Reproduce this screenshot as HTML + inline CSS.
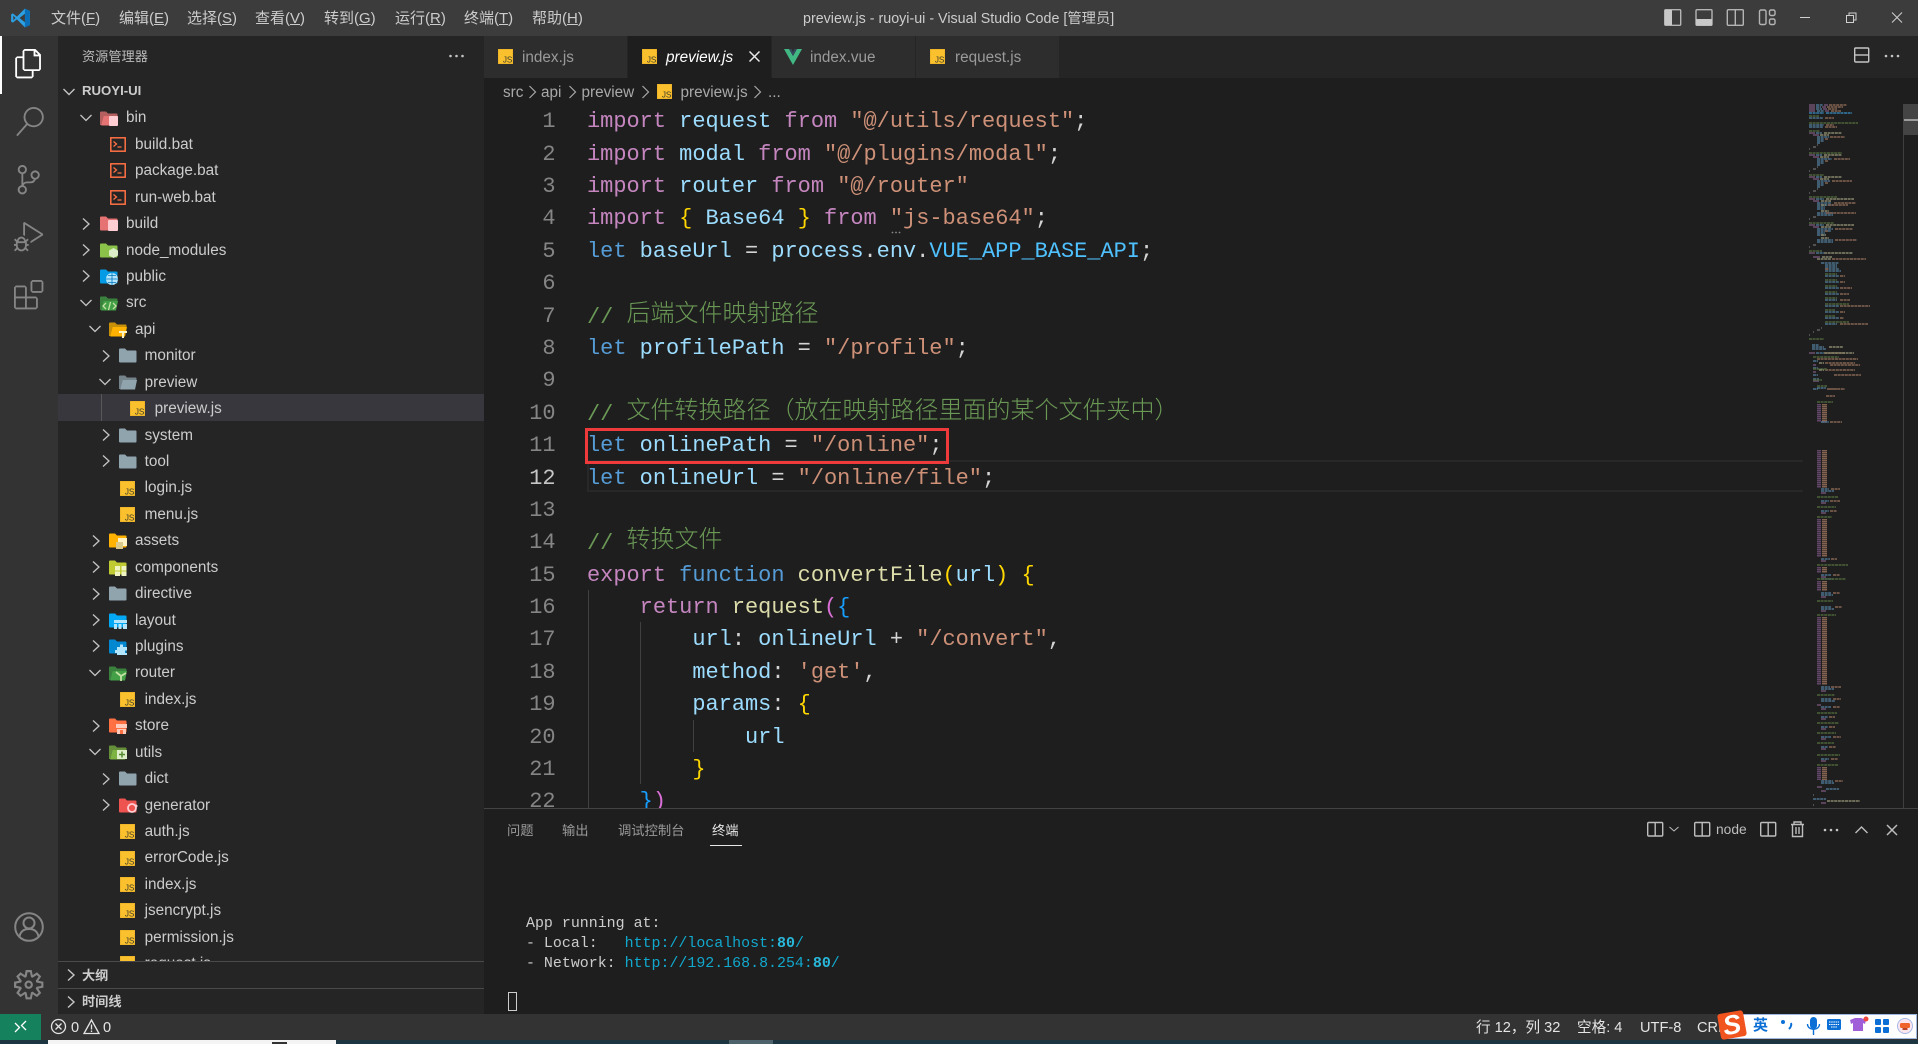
<!DOCTYPE html>
<html lang="zh"><head><meta charset="utf-8"><title>preview.js - ruoyi-ui - Visual Studio Code</title>
<style>
html,body{margin:0;padding:0;width:1918px;height:1044px;overflow:hidden;background:#1e1e1e}
body{position:relative;font-family:"Liberation Sans","Noto Sans CJK SC",sans-serif;color:#ccc}
.a{position:absolute}
svg{position:absolute;overflow:visible}
.m{position:absolute;top:0;height:36px;line-height:38px;font-size:15px;color:#ccc;white-space:nowrap}
.r{position:absolute;left:0;height:26.4px;width:484px}
.r span{position:absolute;top:0;line-height:28.4px;font-size:15.3px;color:#ccc;white-space:nowrap}
.r svg{top:6.3px}
.r svg.c{top:7.500px;width:12px;height:12px;fill:none;stroke:#c5c5c5;stroke-width:1.3}
.t{position:absolute;top:36px;height:42px;line-height:44px;font-size:15.3px;color:#9a9a9a;background:#2d2d2d}
.t span{position:absolute;top:0;white-space:nowrap}
.ed{position:absolute;left:0;top:106px;width:1918px;height:702px;overflow:hidden;font-family:"Liberation Mono",monospace;font-size:21.95px;line-height:32.38px;white-space:pre}
.n{position:absolute;left:500px;width:55.6px;text-align:right;color:#858585}
.l{position:absolute;left:587px;color:#d4d4d4;height:32.38px}
.k{color:#c586c0}.v{color:#9cdcfe}.s{color:#ce9178}.b{color:#569cd6}.f{color:#dcdcaa}.C{color:#4fc1ff}.g{color:#ffd700}.o{color:#da70d6}.u{color:#179fff}
.c2{color:#6a9955}.c2 i{font-style:normal;font-family:"Noto Sans CJK SC",sans-serif;font-size:24px;font-weight:300;line-height:1;position:relative;top:-2px}
.bc{position:absolute;top:78px;height:26px;line-height:30px;font-size:15.3px;color:#a9a9a9;white-space:nowrap}
.pt{position:absolute;top:819px;line-height:23px;font-size:13.3px;color:#9a9a9a;white-space:nowrap}
.tm{position:absolute;left:526px;font-family:"Liberation Mono",monospace;font-size:14.95px;line-height:20px;color:#ccc;white-space:pre}
.tm a{color:#11a8cd;text-decoration:none}.tm b{color:#29b8db}
.st{position:absolute;top:1014px;line-height:28px;height:26px;font-size:14.6px;color:#e4e4e4;white-space:nowrap}
.ic{fill:none;stroke:#c5c5c5;stroke-width:1.4}
</style></head><body>
<svg width="0" height="0" style="position:absolute">
<defs>
<symbol id="cd" viewBox="0 0 12 12"><path d="M0.5 3l5.5 5.5L11.5 3"/></symbol>
<symbol id="cr" viewBox="0 0 12 12"><path d="M3 0.5L9 6l-6 5.500"/></symbol>
<symbol id="js" viewBox="0 0 15 15"><rect width="15" height="15" fill="#fbc02d"/><path d="M0 0h15v15H0z" fill="none" stroke="#e0a526" stroke-width=".8"/><text x="14.4" y="13.6" text-anchor="end" font-family="Liberation Sans" font-size="8.200" fill="#3a3a2a">JS</text></symbol>
<symbol id="bat" viewBox="0 0 16 15"><rect x=".8" y=".8" width="14.400" height="13.400" fill="none" stroke="#ff7043" stroke-width="1.500"/><path d="M3.500 4.500l3 2.500-3 2.500M7.500 10h4" fill="none" stroke="#ff7043" stroke-width="1.300"/></symbol>
<symbol id="fc" viewBox="0 0 18 15"><path d="M0 1.500Q0 .5 1 .5h5l2 2h8.500q1 0 1 1v10q0 1-1 1H1q-1 0-1-1z"/></symbol>
<symbol id="fo" viewBox="0 0 18 15"><path d="M1 .5h5l2 2h8.500q1 0 1 1V5H3.500L1.500 14H0V1.500Q0 .5 1 .5z" opacity=".75"/><path d="M3.500 5H18l-2 9.500H1.200z"/></symbol>
</defs></svg>

<!-- title bar -->
<div class="a" style="left:0;top:0;width:1918px;height:36px;background:#3c3c3c"></div>
<svg style="left:10px;top:8px" width="21" height="20" viewBox="0 0 100 100"><path fill="#2d9fe3" d="M72 3L32 43 12 27 3 32v36l9 5 20-16 40 40 25-12V15z"/><path fill="#0a6fb8" d="M72 3l25 12v70L72 97z"/><path fill="#3c3c3c" d="M72 29v42L45 50z"/><path fill="#3c3c3c" d="M14 38l11 12-11 12z"/></svg>
<div class="m" style="left:51px">文件(<u>F</u>)</div>
<div class="m" style="left:119px">编辑(<u>E</u>)</div>
<div class="m" style="left:187px">选择(<u>S</u>)</div>
<div class="m" style="left:255px">查看(<u>V</u>)</div>
<div class="m" style="left:324px">转到(<u>G</u>)</div>
<div class="m" style="left:395px">运行(<u>R</u>)</div>
<div class="m" style="left:464px">终端(<u>T</u>)</div>
<div class="m" style="left:532px">帮助(<u>H</u>)</div>
<div class="m" style="left:803px;font-size:14.3px;color:#ccc;line-height:38px">preview.js - ruoyi-ui - Visual Studio Code [管理员]</div>
<svg style="left:1664px;top:9px" width="112" height="18" fill="none" stroke="#b4b4b4" stroke-width="1.400">
<rect x=".7" y=".7" width="16" height="15.600" rx="1"/><rect x="1" y="1" width="7" height="15" fill="#c8c8c8" stroke="none"/>
<rect x="32" y=".7" width="16" height="15.600" rx="1"/><rect x="32" y="10" width="16" height="6.500" fill="#c8c8c8" stroke="none"/>
<rect x="63.300" y=".7" width="16" height="15.600" rx="1"/><path d="M71.300 1v15"/>
<rect x="95.500" y="1" width="6.500" height="14.500" rx="1.500"/><rect x="105.500" y="1" width="5.500" height="5.500" rx="1.500"/><rect x="105.500" y="10" width="5.500" height="5.500" rx="1.500"/>
</svg>
<svg style="left:1800px;top:10px" width="104" height="16" fill="none" stroke="#d0d0d0" stroke-width="1">
<path d="M0 7.500h10"/><rect x="46.500" y="5.500" width="7" height="7"/><path d="M49 5V3h7v7h-2"/><path d="M92 2.500l10 10M102 2.500l-10 10"/>
</svg>

<!-- activity bar -->
<div class="a" style="left:0;top:36px;width:58px;height:978px;background:#333"></div>
<div class="a" style="left:0;top:36px;width:2px;height:58px;background:#fff"></div>
<svg style="left:14px;top:49px" width="29.400" height="29.400" viewBox="0 0 24 24" fill="#fff"><path d="M17.500 0h-9L7 1.500V6H2.500L1 7.500v15.070L2.500 24h12.070L16 22.570V18h4.700l1.300-1.430V4.500L17.500 0zm0 2.120l2.380 2.380H17.500V2.120zm-3 20.380h-12v-15H7v9.070L8.500 18h6v4.500zm6-6h-12v-15H16V6h4.500v10.500z"/></svg>
<svg style="left:15px;top:107px" width="29.400" height="29.400" viewBox="0 0 24 24" fill="#858585"><path d="M15.250 0a8.250 8.250 0 0 0-6.180 13.720L1 22.880l1.120 1 8.050-9.120A8.251 8.251 0 1 0 15.250.01V0zm0 15a6.750 6.750 0 1 1 0-13.500 6.750 6.750 0 0 1 0 13.500z"/></svg>
<svg style="left:14px;top:165px" width="29.400" height="29.400" viewBox="0 0 24 24" fill="#858585"><path d="M21.007 8.222A3.738 3.738 0 0 0 15.045 5.200a3.737 3.737 0 0 0 1.156 6.583 2.988 2.988 0 0 1-2.668 1.670h-2.990a4.456 4.456 0 0 0-2.989 1.165V7.400a3.737 3.737 0 1 0-1.494 0v9.117a3.776 3.776 0 1 0 1.816.099 2.990 2.990 0 0 1 2.668-1.667h2.990a4.484 4.484 0 0 0 4.223-3.039 3.736 3.736 0 0 0 3.250-3.687zM4.565 3.738a2.242 2.242 0 1 1 4.484 0 2.242 2.242 0 0 1-4.484 0zm4.484 16.440a2.242 2.242 0 1 1-4.484 0 2.242 2.242 0 0 1 4.484 0zm8.221-9.715a2.242 2.242 0 1 1 0-4.485 2.242 2.242 0 0 1 0 4.485z"/></svg>
<svg style="left:14px;top:222px" width="29.400" height="29.400" viewBox="0 0 24 24" fill="#858585"><path d="M10.940 13.500l-1.320 1.320a3.730 3.730 0 0 0-7.240 0L1.060 13.500 0 14.560l1.720 1.720-.22.220V18H0v1.500h1.500v.08c.077.489.214.966.41 1.420L0 22.940 1.060 24l1.650-1.650A4.308 4.308 0 0 0 6 24a4.310 4.310 0 0 0 3.290-1.650L10.940 24 12 22.940 10.090 21c.198-.464.336-.951.41-1.450v-.1H12V18h-1.500v-1.500l-.22-.22L12 14.560l-1.060-1.060zM6 13.500a2.250 2.250 0 0 1 2.250 2.250h-4.500A2.250 2.250 0 0 1 6 13.500zm3 6a3.330 3.330 0 0 1-3 3 3.330 3.330 0 0 1-3-3v-2.250h6v2.250zm14.760-9.900v1.260L13.500 17.370v-1.800l8.500-5.370L9 2v9.460a5.070 5.070 0 0 0-1.500-.72V.63L8.640 0l15.120 9.600z"/></svg>
<svg style="left:14px;top:280px" width="29.400" height="29.400" viewBox="0 0 24 24" fill="#858585"><path d="M13.500 1.500L15 0h7.500L24 1.500V9l-1.500 1.500H15L13.500 9V1.500zm1.500 0V9h7.500V1.500H15zM0 15V6l1.500-1.500H9L10.500 6v7.500H18l1.500 1.500v7.500L18 24H1.500L0 22.500V15zm9-1.500V6H1.500v7.500H9zM9 15H1.500v7.500H9V15zm1.500 7.500H18V15h-7.500v7.500z"/></svg>
<svg style="left:14px;top:912px" width="30" height="30" viewBox="0 0 30 30" fill="none" stroke="#858585" stroke-width="2"><circle cx="15" cy="15" r="13.800"/><circle cx="15" cy="11" r="5.500"/><path d="M5.500 24.500c1-5 4.500-7.500 9.500-7.500s8.500 2.500 9.500 7.500"/></svg>
<svg style="left:14px;top:970px" width="29.400" height="29.400" viewBox="0 0 24 24" fill="#858585"><path d="M19.850 8.750l4.150.83v4.840l-4.150.83 2.350 3.520-3.430 3.430-3.520-2.350-.83 4.150H9.580l-.83-4.150-3.520 2.350-3.430-3.430 2.350-3.520L0 14.420V9.580l4.150-.83L1.800 5.230 5.230 1.800l3.520 2.350L9.580 0h4.840l.83 4.150 3.520-2.350 3.430 3.430-2.350 3.520zm-1.570 5.070l4-.81v-2l-4-.81-.54-1.300 2.290-3.430-1.430-1.430-3.430 2.290-1.300-.54-.81-4h-2l-.81 4-1.300.54-3.430-2.290-1.430 1.430L6.380 8.900l-.54 1.300-4 .81v2l4 .81.54 1.300-2.290 3.430 1.430 1.430 3.430-2.290 1.300.54.81 4h2l.81-4 1.300-.54 3.430 2.290 1.430-1.430-2.290-3.430.54-1.300zm-8.186-4.672A3.430 3.430 0 0 1 12 8.570 3.440 3.440 0 0 1 15.430 12a3.430 3.430 0 1 1-5.336-2.852zm.956 4.274c.281.188.612.288.95.288A1.700 1.700 0 0 0 13.710 12a1.710 1.710 0 1 0-2.660 1.422z"/></svg>

<!-- sidebar -->
<div class="a" style="left:58px;top:36px;width:426px;height:978px;background:#252526"></div>
<div class="a" style="left:82px;top:47px;font-size:13.2px;line-height:20px;color:#bbb">资源管理器</div>
<svg style="left:449px;top:54px" width="16" height="4" fill="#c5c5c5"><circle cx="1.500" cy="2" r="1.300"/><circle cx="7.500" cy="2" r="1.300"/><circle cx="13.500" cy="2" r="1.300"/></svg>
<svg class="ic" style="left:63px;top:86px" width="12" height="12" viewBox="0 0 12 12"><path d="M0.500 3l5.500 5.500L11.500 3"/></svg>
<div class="a" style="left:82px;top:81px;font-size:13.2px;line-height:20px;font-weight:700;color:#ccc">RUOYI-UI</div>
<div class="a" style="left:58px;top:394px;width:426px;height:27px;background:#37373d"></div>
<div class="a" style="left:101px;top:394px;width:1px;height:27px;background:#585858"></div>

<div class="a" style="left:0;top:0;width:484px;height:961px;overflow:hidden">
<div class="r" style="top:104.3px"><svg class="c" style="left:80px"><use href="#cd"/></svg><svg style="left:100px;color:#e57373;fill:#e57373" width="18" height="15"><use href="#fo"/><rect x="9" y="5" width="9" height="10" rx="1" fill="#ffcdd2"/></svg><span style="left:126px">bin</span></div>
<div class="r" style="top:130.7px"><svg style="left:110px" width="16" height="15"><use href="#bat"/></svg><span style="left:135px">build.bat</span></div>
<div class="r" style="top:157.2px"><svg style="left:110px" width="16" height="15"><use href="#bat"/></svg><span style="left:135px">package.bat</span></div>
<div class="r" style="top:183.6px"><svg style="left:110px" width="16" height="15"><use href="#bat"/></svg><span style="left:135px">run-web.bat</span></div>
<div class="r" style="top:210.0px"><svg class="c" style="left:80px"><use href="#cr"/></svg><svg style="left:100px;fill:#e57373" width="18" height="15"><use href="#fc"/><rect x="8" y="4" width="10" height="11" rx="1" fill="#ffcdd2"/></svg><span style="left:126px">build</span></div>
<div class="r" style="top:236.5px"><svg class="c" style="left:80px"><use href="#cr"/></svg><svg style="left:100px;fill:#8bc34a" width="18" height="15"><use href="#fc"/><path d="M13.500 5l4.500 2.500v5l-4.500 2.500-4.500-2.500v-5z" fill="#dcedc8"/></svg><span style="left:126px">node_modules</span></div>
<div class="r" style="top:262.9px"><svg class="c" style="left:80px"><use href="#cr"/></svg><svg style="left:100px;fill:#039be5" width="18" height="15"><use href="#fc"/><circle cx="12" cy="10" r="6" fill="#b3e5fc"/><path d="M6 10h12M12 4v12M8 6.500h8M8 13.500h8" stroke="#0277bd" stroke-width=".8" fill="none"/></svg><span style="left:126px">public</span></div>
<div class="r" style="top:289.3px"><svg class="c" style="left:80px"><use href="#cd"/></svg><svg style="left:100px;fill:#43a047" width="18" height="15"><use href="#fo"/><path d="M6 7l-3 3 3 3M13 7l3 3-3 3M10.500 6l-2 8" stroke="#c5e1a5" stroke-width="1.300" fill="none"/></svg><span style="left:126px">src</span></div>
<div class="r" style="top:315.7px"><svg class="c" style="left:89px"><use href="#cd"/></svg><svg style="left:109px;fill:#ffb300" width="18" height="15"><use href="#fo"/><path d="M10 9h8v2h-3v5h-2v-5h-3z" fill="#fff3c4"/></svg><span style="left:135px">api</span></div>
<div class="r" style="top:342.2px"><svg class="c" style="left:100px"><use href="#cr"/></svg><svg style="left:119px;fill:#90a4ae" width="18" height="15"><use href="#fc"/></svg><span style="left:144.600px">monitor</span></div>
<div class="r" style="top:368.6px"><svg class="c" style="left:99px"><use href="#cd"/></svg><svg style="left:119px;fill:#90a4ae" width="18" height="15"><use href="#fo"/></svg><span style="left:144.600px">preview</span></div>
<div class="r" style="top:395.0px"><svg style="left:130px" width="15" height="15"><use href="#js"/></svg><span style="left:154.600px">preview.js</span></div>
<div class="r" style="top:421.5px"><svg class="c" style="left:100px"><use href="#cr"/></svg><svg style="left:119px;fill:#90a4ae" width="18" height="15"><use href="#fc"/></svg><span style="left:144.600px">system</span></div>
<div class="r" style="top:447.9px"><svg class="c" style="left:100px"><use href="#cr"/></svg><svg style="left:119px;fill:#90a4ae" width="18" height="15"><use href="#fc"/></svg><span style="left:144.600px">tool</span></div>
<div class="r" style="top:474.3px"><svg style="left:120px" width="15" height="15"><use href="#js"/></svg><span style="left:144.600px">login.js</span></div>
<div class="r" style="top:500.8px"><svg style="left:120px" width="15" height="15"><use href="#js"/></svg><span style="left:144.600px">menu.js</span></div>
<div class="r" style="top:527.2px"><svg class="c" style="left:90px"><use href="#cr"/></svg><svg style="left:109px;fill:#ffb300" width="18" height="15"><use href="#fc"/><rect x="9" y="5" width="9" height="8" fill="#fff3c4"/><rect x="7" y="9" width="7" height="7" fill="#d9c98a"/></svg><span style="left:135px">assets</span></div>
<div class="r" style="top:553.6px"><svg class="c" style="left:90px"><use href="#cr"/></svg><svg style="left:109px;fill:#c0ca33" width="18" height="15"><use href="#fc"/><path d="M6 6h5v4.500H6zM12.500 6h5v4.500h-5zM6 11.500h5V16H6zM12.500 11.500h5V16h-5z" fill="#f0f4c3"/></svg><span style="left:135px">components</span></div>
<div class="r" style="top:580.0px"><svg class="c" style="left:90px"><use href="#cr"/></svg><svg style="left:109px;fill:#90a4ae" width="18" height="15"><use href="#fc"/></svg><span style="left:135px">directive</span></div>
<div class="r" style="top:606.5px"><svg class="c" style="left:90px"><use href="#cr"/></svg><svg style="left:109px;fill:#03a9f4" width="18" height="15"><use href="#fc"/><path d="M5 7h13v3H5zM5 11h3v5H5zM9.500 11h3v5h-3zM14 11h4v5h-4z" fill="#b3e5fc"/></svg><span style="left:135px">layout</span></div>
<div class="r" style="top:632.9px"><svg class="c" style="left:90px"><use href="#cr"/></svg><svg style="left:109px;fill:#0288d1" width="18" height="15"><use href="#fc"/><path d="M8 8h3V5.500h3V8h4v3.500h-2V14h2v2H8v-2H6v-3h2z" fill="#b3e5fc"/></svg><span style="left:135px">plugins</span></div>
<div class="r" style="top:659.3px"><svg class="c" style="left:89px"><use href="#cd"/></svg><svg style="left:109px;fill:#43a047" width="18" height="15"><use href="#fo"/><path d="M7 6l5 4 5-3M12 10v5" stroke="#c5e1a5" stroke-width="1.800" fill="none"/></svg><span style="left:135px">router</span></div>
<div class="r" style="top:685.8px"><svg style="left:120px" width="15" height="15"><use href="#js"/></svg><span style="left:144.600px">index.js</span></div>
<div class="r" style="top:712.2px"><svg class="c" style="left:90px"><use href="#cr"/></svg><svg style="left:109px;fill:#ff7043" width="18" height="15"><use href="#fc"/><path d="M7 6h11v4H7zM8 11h9v5H8z" fill="#ffccbc"/><rect x="11" y="12" width="3" height="4" fill="#ff7043"/></svg><span style="left:135px">store</span></div>
<div class="r" style="top:738.6px"><svg class="c" style="left:89px"><use href="#cd"/></svg><svg style="left:109px;fill:#7cb342" width="18" height="15"><use href="#fo"/><rect x="8" y="5" width="10" height="9" fill="#dcedc8"/><path d="M13 6.500v6M10 9.500h6" stroke="#558b2f" stroke-width="1.500"/></svg><span style="left:135px">utils</span></div>
<div class="r" style="top:765.1px"><svg class="c" style="left:100px"><use href="#cr"/></svg><svg style="left:119px;fill:#90a4ae" width="18" height="15"><use href="#fc"/></svg><span style="left:144.600px">dict</span></div>
<div class="r" style="top:791.5px"><svg class="c" style="left:100px"><use href="#cr"/></svg><svg style="left:119px;fill:#ef5350" width="18" height="15"><use href="#fc"/><circle cx="13" cy="10" r="4" fill="none" stroke="#ffcdd2" stroke-width="1.800"/><circle cx="17" cy="8" r="1.500" fill="#ffcdd2"/></svg><span style="left:144.600px">generator</span></div>
<div class="r" style="top:817.9px"><svg style="left:120px" width="15" height="15"><use href="#js"/></svg><span style="left:144.600px">auth.js</span></div>
<div class="r" style="top:844.3px"><svg style="left:120px" width="15" height="15"><use href="#js"/></svg><span style="left:144.600px">errorCode.js</span></div>
<div class="r" style="top:870.8px"><svg style="left:120px" width="15" height="15"><use href="#js"/></svg><span style="left:144.600px">index.js</span></div>
<div class="r" style="top:897.2px"><svg style="left:120px" width="15" height="15"><use href="#js"/></svg><span style="left:144.600px">jsencrypt.js</span></div>
<div class="r" style="top:923.6px"><svg style="left:120px" width="15" height="15"><use href="#js"/></svg><span style="left:144.600px">permission.js</span></div>
<div class="r" style="top:950.1px"><svg style="left:120px" width="15" height="15"><use href="#js"/></svg><span style="left:144.600px">request.js</span></div>
</div>
<div class="a" style="left:58px;top:961px;width:426px;height:1px;background:#4a4a4a"></div>
<div class="a" style="left:58px;top:988px;width:426px;height:1px;background:#4a4a4a"></div>
<svg class="ic" style="left:65px;top:969px" width="12" height="12" viewBox="0 0 12 12"><path d="M3 0.500L9 6l-6 5.500"/></svg>
<svg class="ic" style="left:65px;top:996px" width="12" height="12" viewBox="0 0 12 12"><path d="M3 0.500L9 6l-6 5.500"/></svg>
<div class="a" style="left:82px;top:966px;font-size:13.200px;line-height:20px;font-weight:700;color:#ccc">大纲</div>
<div class="a" style="left:82px;top:992px;font-size:13.200px;line-height:20px;font-weight:700;color:#ccc">时间线</div>

<!-- tabs -->
<div class="a" style="left:484px;top:36px;width:1434px;height:42px;background:#252526"></div>
<div class="t" style="left:484px;width:143px"><svg style="left:14px;top:13px" width="15" height="15"><use href="#js"/></svg><span style="left:38px">index.js</span></div>
<div class="t" style="left:628px;width:143px;background:#1e1e1e;color:#fff"><svg style="left:14px;top:13px" width="15" height="15"><use href="#js"/></svg><span style="left:38px;font-style:italic">preview.js</span><svg style="left:121px;top:15px" width="11" height="11" stroke="#e8e8e8" stroke-width="1.500"><path d="M.5.500l10 10M10.500.500l-10 10"/></svg></div>
<div class="t" style="left:772px;width:143px"><svg style="left:12px;top:13px" width="18" height="16" viewBox="0 0 18 16"><path fill="#41b883" d="M0 0h5l4 7 4-7h5L9 16z"/><path fill="#35495e" d="M5 0h2.500L9 3l1.500-3H13L9 7z"/></svg><span style="left:38px">index.vue</span></div>
<div class="t" style="left:916px;width:143px"><svg style="left:14px;top:13px" width="15" height="15"><use href="#js"/></svg><span style="left:39px">request.js</span></div>
<svg style="left:1854px;top:47px" width="48" height="18" fill="none" stroke="#c5c5c5" stroke-width="1.400"><rect x=".7" y="1" width="14" height="14" rx="1"/><path d="M1 8h14"/><g fill="#c5c5c5" stroke="none"><circle cx="32" cy="9" r="1.300"/><circle cx="38" cy="9" r="1.300"/><circle cx="44" cy="9" r="1.300"/></g></svg>

<!-- breadcrumbs -->
<div class="bc" style="left:503px">src</div><div class="bc" style="left:541px">api</div><div class="bc" style="left:581.500px">preview</div><div class="bc" style="left:680.500px">preview.js</div><div class="bc" style="left:768px">...</div>
<svg style="left:529px;top:85px" width="232" height="14" fill="none" stroke="#a9a9a9" stroke-width="1.200"><path d="M0.500 1l6 6-6 6M40.500 1l6 6-6 6M113.500 1l6 6-6 6M225.500 1l6 6-6 6"/></svg>
<svg style="left:656.500px;top:84px" width="15" height="15"><use href="#js"/></svg>

<!-- editor -->
<div class="a" style="left:587px;top:460px;width:1216px;height:32px;border:2px solid #282828;border-right:0;box-sizing:border-box"></div>
<div class="a" style="left:587.500px;top:590px;width:1px;height:218px;background:#404040"></div>
<div class="a" style="left:640px;top:622px;width:1px;height:162px;background:#404040"></div>
<div class="a" style="left:692.500px;top:720px;width:1px;height:32px;background:#404040"></div>
<div class="ed">
<div class="n" style="top:0.3px">1</div><div class="l" style="top:0.3px"><span class="k">import</span> <span class="v">request</span> <span class="k">from</span> <span class="s">"@/utils/request"</span>;</div>
<div class="n" style="top:32.7px">2</div><div class="l" style="top:32.7px"><span class="k">import</span> <span class="v">modal</span> <span class="k">from</span> <span class="s">"@/plugins/modal"</span>;</div>
<div class="n" style="top:65.1px">3</div><div class="l" style="top:65.1px"><span class="k">import</span> <span class="v">router</span> <span class="k">from</span> <span class="s">"@/router"</span></div>
<div class="n" style="top:97.4px">4</div><div class="l" style="top:97.4px"><span class="k">import</span> <span class="g">{</span> <span class="v">Base64</span> <span class="g">}</span> <span class="k">from</span> <span class="s">"js-base64"</span>;</div>
<div class="n" style="top:129.8px">5</div><div class="l" style="top:129.8px"><span class="b">let</span> <span class="v">baseUrl</span> = <span class="v">process</span>.<span class="v">env</span>.<span class="C">VUE_APP_BASE_API</span>;</div>
<div class="n" style="top:162.2px">6</div>
<div class="n" style="top:194.6px">7</div><div class="l c2" style="top:194.6px">// <i>后端文件映射路径</i></div>
<div class="n" style="top:227px">8</div><div class="l" style="top:227px"><span class="b">let</span> <span class="v">profilePath</span> = <span class="s">"/profile"</span>;</div>
<div class="n" style="top:259.3px">9</div>
<div class="n" style="top:291.7px">10</div><div class="l c2" style="top:291.7px">// <i>文件转换路径（放在映射路径里面的某个文件夹中）</i></div>
<div class="n" style="top:324.1px">11</div><div class="l" style="top:324.1px"><span class="b">let</span> <span class="v">onlinePath</span> = <span class="s">"/online"</span>;</div>
<div class="n" style="top:356.5px;color:#c6c6c6">12</div><div class="l" style="top:356.5px"><span class="b">let</span> <span class="v">onlineUrl</span> = <span class="s">"/online/file"</span>;</div>
<div class="n" style="top:388.9px">13</div>
<div class="n" style="top:421.2px">14</div><div class="l c2" style="top:421.2px">// <i>转换文件</i></div>
<div class="n" style="top:453.6px">15</div><div class="l" style="top:453.6px"><span class="k">export</span> <span class="b">function</span> <span class="f">convertFile</span><span class="g">(</span><span class="v">url</span><span class="g">)</span> <span class="g">{</span></div>
<div class="n" style="top:486px">16</div><div class="l" style="top:486px">    <span class="k">return</span> <span class="f">request</span><span class="o">(</span><span class="u">{</span></div>
<div class="n" style="top:518.4px">17</div><div class="l" style="top:518.4px">        <span class="v">url</span>: <span class="v">onlineUrl</span> + <span class="s">"/convert"</span>,</div>
<div class="n" style="top:550.8px">18</div><div class="l" style="top:550.8px">        <span class="v">method</span>: <span class="s">'get'</span>,</div>
<div class="n" style="top:583.1px">19</div><div class="l" style="top:583.1px">        <span class="v">params</span>: <span class="g">{</span></div>
<div class="n" style="top:615.5px">20</div><div class="l" style="top:615.5px">            <span class="v">url</span></div>
<div class="n" style="top:647.9px">21</div><div class="l" style="top:647.9px">        <span class="g">}</span></div>
<div class="n" style="top:680.3px">22</div><div class="l" style="top:680.3px">    <span class="u">}</span><span class="o">)</span></div>
</div>
<svg style="left:891px;top:231px" width="10" height="3" fill="#8a8a8a"><circle cx="1.500" cy="1.500" r=".9"/><circle cx="5" cy="1.500" r=".9"/><circle cx="8.500" cy="1.500" r=".9"/></svg>
<div class="a" style="left:584.500px;top:427.500px;width:364.500px;height:36.500px;border:3px solid #ef3a3c;box-sizing:border-box"></div>

<!-- minimap -->
<svg style="left:1800px;top:100px;opacity:.85" width="118" height="710" fill="none" stroke-width="1.400">
<path stroke="#7b5a80" d="M9 5h6M9 7h6M9 9h6M9 11h6M24 5h4M22 7h4M23 9h4M25 11h4M9 33h6M13 35h6M9 55h6M13 57h6M9 77h6M13 79h6M9 99h6M13 101h6M9 125h6M13 127h6M9 153h6M13 157h7M9 253h6M13 265h3M13 272h3M13 281h6M21 322h5M21 393h5M21 403h5M21 413h5M21 461h5M21 477h5M21 497h5M21 511h5M21 591h5M17 605h4M21 609h5M21 619h5M21 629h5M21 639h5M21 649h5M21 661h5M17 687h5M21 691h5M21 703h5"/>
<path stroke="#6d4d74" stroke-width="4" stroke-dasharray="1.500 .5" d="M19 304V322M19 350V388M19 419V457M19 467V473M19 481V491M19 517V585M19 667V680"/>
<path stroke="#96705a" stroke-width="5" stroke-dasharray="1.500 .5" d="M24.500 304V322M24.500 350V388M24.500 419V457M24.500 467V473M24.500 481V491M24.500 517V585M24.500 667V680"/>
<path stroke="#55809f" stroke-dasharray="3 .6" d="M16 5h7M16 7h5M16 9h6M17 11h7M9 18h14M9 25h15M9 27h14M16 33h6M17 37h12M17 39h7M17 41h7M17 43h3M16 55h6M17 59h15M17 61h7M17 63h7M17 65h3M16 77h6M17 81h13M17 83h7M17 85h7M17 87h3M16 99h8M17 103h14M17 105h16M17 107h8M17 109h8M17 113h16M17 115h16M16 125h8M17 129h16M17 131h14M17 133h8M17 135h8M17 140h16M17 142h16M16 153h8M21 163h18M25 165h12M25 167h12M25 169h14M25 171h16M25 176h14M25 182h14M25 188h14M25 194h14M25 200h12M25 206h14M25 212h14M25 218h14M25 224h12M12 245h7M12 247h12M12 249h14M16 253h8M13 261h5M13 268h5M13 275h5M13 279h6M17 288h9M13 289h5M21 322h8M21 389h8M21 391h13M21 401h8M21 411h8M21 459h9M21 475h10M21 479h12M21 493h10M21 495h12M21 507h10M21 509h13M21 587h9M21 589h13M21 599h10M21 601h14M21 607h10M21 617h7M21 627h7M21 637h10M21 647h7M21 659h8M21 681h12M21 683h13M26 689h13M13 699h13"/>
<path stroke="#3a90c5" stroke-dasharray="3 .6" d="M26 13h26M9 13h15"/>
<path stroke="#96705a" stroke-dasharray="3 .6" d="M29 5h18M27 7h16M28 9h9M31 11h10M25 18h9M26 25h8M25 27h12M30 37h15M25 39h3M34 59h16M25 61h3M32 81h20M25 83h3M34 103h22M28 105h20M26 113h30M35 129h18M25 131h3M35 140h22M25 169h4M32 159h34M40 176h5M40 182h5M40 188h12M40 194h9M40 200h10M40 206h30M40 212h5M40 218h4M40 224h28M25 253h20M17 259h41M25 263h30M30 265h30M25 270h30M34 275h27M30 289h15M27 289h10M26 296h9M30 322h12M31 389h9M30 401h10M30 411h7M31 459h6M33 475h7M33 493h7M35 507h7M31 587h10M33 599h8M33 607h7M29 617h6M29 627h6M33 637h8M29 647h7M31 659h7M35 681h8"/>
<path stroke="#55703f" stroke-dasharray="3 .6" d="M9 16h10M9 23h49M9 31h11M9 53h33M9 75h15M9 97h28M9 123h25M9 151h13M25 174h12M25 180h12M25 186h12M25 192h12M25 198h12M25 204h24M25 210h10M25 216h10M25 222h24M9 239h15M13 257h26M13 269h14M13 280h9M17 286h10M17 302h16M17 397h21M17 407h19M17 417h15M17 465h31M17 479h29M17 501h16M17 515h19M17 595h18M17 613h20M17 623h22M17 633h19M17 643h17M17 655h23M17 665h21"/>
<path stroke="#9a9a7a" stroke-dasharray="3 .6" d="M24 33h18M20 35h9M24 55h18M20 57h9M24 77h18M20 79h9M26 99h28M21 101h10M26 125h28M21 127h10M21 105h5M21 135h5M24 153h29M22 157h10M17 159h14M24 253h30M19 263h5M19 270h5M21 111h8M21 138h8M29 247h14M27 701h33"/>
<path stroke="#6f6f6f" d="M17 45h1M13 47h3M9 49h1M17 67h1M13 69h3M9 71h1M17 89h1M13 91h3M9 93h1M13 117h3M9 119h1M13 145h3M9 147h1M21 228h1M17 230h3M13 232h1M9 235h1M13 695h1M13 705h1"/>
</svg>
<div class="a" style="left:1903px;top:104px;width:1px;height:704px;background:#3f3f3f"></div>
<div class="a" style="left:1903px;top:104px;width:15px;height:31px;background:#444"></div>
<div class="a" style="left:1904px;top:119px;width:14px;height:2px;background:#9c9c9c"></div>

<!-- panel -->
<div class="a" style="left:484px;top:808px;width:1434px;height:206px;background:#1e1e1e;border-top:1px solid #434343;box-sizing:border-box"></div>
<div class="pt" style="left:507px">问题</div><div class="pt" style="left:562px">输出</div><div class="pt" style="left:618px">调试控制台</div><div class="pt" style="left:712px;color:#e7e7e7">终端</div>
<div class="a" style="left:710px;top:845px;width:32px;height:1px;background:#e7e7e7"></div>
<div class="tm" style="top:914px">App running at:</div>
<div class="tm" style="top:934px">- Local:   <a>http://localhost:<b>80</b>/</a></div>
<div class="tm" style="top:954px">- Network: <a>http://192.168.8.254:<b>80</b>/</a></div>
<div class="a" style="left:508px;top:992px;width:9px;height:19px;border:1px solid #ccc;box-sizing:border-box"></div>
<svg style="left:1647px;top:821px" width="254" height="17" fill="none" stroke="#bdbdbd" stroke-width="1.400">
<rect x=".7" y="1.500" width="15" height="13.500" rx="1"/><path d="M8.200 2v13"/><path d="M22.500 6l4.500 4 4.500-4" stroke-width="1"/>
<rect x="47.700" y="1.500" width="15" height="13.500" rx="1"/><path d="M55.200 2v13"/>
<rect x="113.700" y="1.500" width="15" height="13.500" rx="1"/><path d="M121.200 2v13"/>
<path d="M144 3.500h13M147 3.500V1h7v2.500M145.500 4v11.500h10V4M149 6v7M152 6v7"/>
<g fill="#c5c5c5" stroke="none"><circle cx="178" cy="9" r="1.300"/><circle cx="184" cy="9" r="1.300"/><circle cx="190" cy="9" r="1.300"/></g>
<path d="M208.500 12l6-6 6 6"/><path d="M240 4l10 10M250 4l-10 10" stroke-width="1.500"/>
</svg>
<div class="a" style="left:1716px;top:819px;line-height:22px;font-size:13.800px;color:#bdbdbd">node</div>

<!-- status bar -->
<div class="a" style="left:0;top:1014px;width:1918px;height:26px;background:#333"></div>
<div class="a" style="left:0;top:1014px;width:41px;height:26px;background:#16825d"></div>
<svg style="left:14px;top:1020px" width="13" height="14" fill="none" stroke="#fff" stroke-width="1.300"><path d="M1 3l4.500 4.500L1 12M12 1L7.500 5.500 12 10"/></svg>
<svg style="left:51px;top:1019px" width="48" height="16" fill="none" stroke="#e4e4e4" stroke-width="1.300"><circle cx="7.500" cy="7.500" r="7"/><path d="M4.500 4.500l6 6M10.500 4.500l-6 6"/><path d="M40.500 1L33 14.500h15zM40.500 5.500v5M40.500 11.500v1.500"/></svg>
<div class="st" style="left:71px">0</div><div class="st" style="left:103px">0</div>
<div class="st" style="left:1476px">行 12，列 32</div>
<div class="st" style="left:1577px">空格: 4</div>
<div class="st" style="left:1640px">UTF-8</div>
<div class="st" style="left:1697px">CRLF</div>

<!-- taskbar strip -->
<div class="a" style="left:0;top:1040px;width:1918px;height:4px;background:#1c3540"></div>
<div class="a" style="left:48px;top:1040px;width:288px;height:4px;background:#f4f4f4"></div>
<div class="a" style="left:272px;top:1042px;width:15px;height:2px;background:#333"></div>
<div class="a" style="left:729px;top:1040px;width:44px;height:4px;background:#4d626b"></div>

<!-- IME bar -->
<div class="a" style="left:1725px;top:1014px;width:192px;height:25px;background:#fff;border:1px solid #9db8e0;box-sizing:border-box"></div>
<div class="a" style="left:1719px;top:1012px;width:26px;height:26px;background:#f2541f;border-radius:3px;transform:rotate(-10deg);color:#fff;font:italic 700 27px/26px 'Liberation Sans',sans-serif;text-align:center">S</div>
<div class="a" style="left:1753px;top:1015px;font-size:15px;line-height:22px;font-weight:700;color:#0b6fd6">英</div>
<svg style="left:1780px;top:1016px" width="137" height="22">
<circle cx="3" cy="6" r="2" fill="#0b6fd6"/><path d="M11 7c1 3-1 5-2 6" stroke="#0b6fd6" stroke-width="2" fill="none"/>
<rect x="30" y="1" width="7" height="12" rx="3.500" fill="#0b6fd6"/><path d="M27.500 8c0 7 12 7 12 0M33.500 13v6" stroke="#0b6fd6" stroke-width="1.400" fill="none"/>
<rect x="47" y="3" width="14" height="11" rx="1.500" fill="#0b6fd6"/><path d="M49 6h10M49 8.500h10M51 11h6" stroke="#fff" stroke-width="1.100" stroke-dasharray="1.500 .7"/>
<path d="M70 4l5-2h6l5 2-1 4-2-1v8h-10V7l-2 1z" fill="#a05fd9"/><circle cx="86" cy="3" r="2.500" fill="#f0483e"/>
<rect x="95" y="3" width="6" height="6" rx="1" fill="#0b6fd6"/><rect x="103" y="3" width="6" height="6" rx="1" fill="#0b6fd6"/><rect x="95" y="11" width="6" height="6" rx="1" fill="#0b6fd6"/><rect x="103" y="11" width="6" height="6" rx="1" fill="#0b6fd6"/>
<circle cx="125" cy="10" r="7.500" fill="#fbe6ee" stroke="#a6b8e8"/><rect x="120" y="7" width="10" height="5" rx="1.500" fill="#f0642c"/><rect x="122.500" y="12" width="5" height="2" fill="#b9472a"/>
</svg>
</body></html>
